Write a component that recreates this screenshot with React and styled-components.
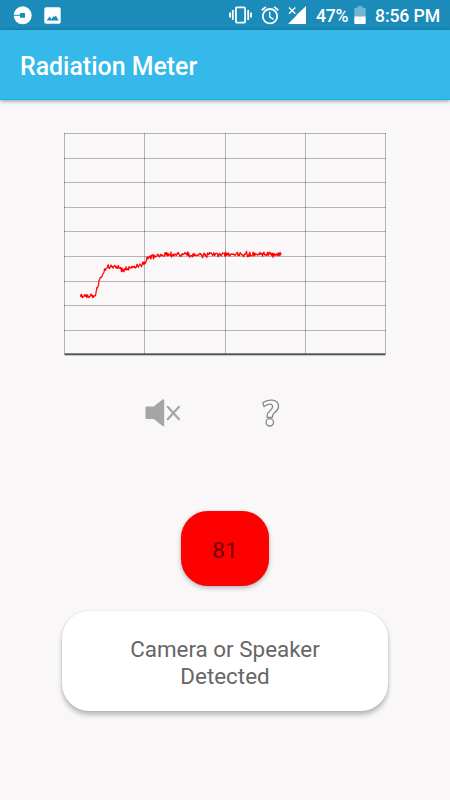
import React from "react";
import styled, { createGlobalStyle } from "styled-components";

const GlobalStyle = createGlobalStyle`
  * { box-sizing: border-box; }
  body { margin: 0; background: #f9f7f8; font-family: Roboto, "Liberation Sans", sans-serif; }
`;

const Screen = styled.div`
  width: 450px;
  height: 800px;
  overflow: hidden;
  display: flex;
  flex-direction: column;
  background: #f9f7f8;
`;

const StatusBar = styled.header`
  flex: none;
  height: 30px;
  padding: 0 9px 0 13px;
  display: flex;
  align-items: center;
  justify-content: space-between;
  background: #1b8bb9;
  color: #fff;
`;

const StatusGroup = styled.div`
  display: flex;
  align-items: center;
  gap: ${(p) => p.$gap}px;
  svg { display: block; flex: none; }
`;

const StatusText = styled.span`
  width: ${(p) => p.$width}px;
  font-size: 17.6px;
  font-weight: 500;
  line-height: 30px;
  padding: 1px 0 0 ${(p) => p.$inset || 0}px;
  letter-spacing: ${(p) => p.$spacing || 0}px;
  white-space: nowrap;
`;

const AppBar = styled.div`
  flex: none;
  height: 70px;
  padding: 4px 20px 0;
  display: flex;
  align-items: center;
  background: #34b9ea;
  border-bottom: 1px solid #0fb4ea;
  box-shadow: 0 1px 4px rgba(0, 0, 0, 0.4);
`;

const Title = styled.h1`
  margin: 0;
  color: #fff;
  font-size: 24.9px;
  font-weight: 500;
  line-height: 30px;
  white-space: nowrap;
`;

const Content = styled.main`
  flex: 1;
  display: flex;
  flex-direction: column;
  align-items: center;
`;

const Chart = styled.svg`
  display: block;
  flex: none;
  width: 322px;
  height: 223px;
  margin-top: 33px;
`;

const Controls = styled.div`
  width: 160px;
  height: 40px;
  margin-top: 37px;
  padding: 0 25px 0 0;
  display: flex;
  align-items: center;
  justify-content: space-between;
`;

const IconButton = styled.button`
  display: flex;
  padding: 0;
  border: 0;
  background: none;
`;

const Reading = styled.div`
  width: 88px;
  height: 75px;
  margin-top: 78px;
  padding-top: 2px;
  display: flex;
  align-items: center;
  justify-content: center;
  border-radius: 27px;
  background: #ff0000;
  color: #730000;
  font-size: 22.5px;
  box-shadow: 0 2px 5px rgba(0, 0, 0, 0.26), 0 0 1px rgba(0, 0, 0, 0.3);
`;

const MessageCard = styled.div`
  width: 326px;
  height: 100px;
  margin-top: 25px;
  padding-top: 3px;
  display: flex;
  align-items: center;
  justify-content: center;
  border-radius: 27px;
  background: #fff;
  color: #666;
  font-size: 22.4px;
  line-height: 26.5px;
  text-align: center;
  box-shadow: 0 4px 5px rgba(0, 0, 0, 0.25), 0 0 2px rgba(0, 0, 0, 0.13);
`;

const Message = styled.p`
  width: 210px;
  margin: 0;
`;

const ROWS = [0, 25, 49, 74, 98, 123, 148, 172, 197];
const COLUMNS = [0, 80, 161, 241, 321];

const TREND = [
  [16.5, 163], [31, 162.5], [32.5, 158], [34, 152], [36, 146], [39, 141],
  [41, 136], [46, 134], [52, 133], [59, 137], [66, 135.5], [73, 133],
  [81, 131], [83, 124.5], [91, 123.5], [101, 121.5], [217, 121.5],
];

function levelAt(x) {
  const i = Math.max(1, TREND.findIndex(([tx]) => tx >= x));
  const [x0, y0] = TREND[i - 1];
  const [x1, y1] = TREND[i];
  return y0 + ((y1 - y0) * (x - x0)) / (x1 - x0);
}

function buildTrace() {
  let seed = 71;
  const random = () => {
    seed = (seed * 16807) % 2147483647;
    return seed / 2147483647;
  };
  const points = [];
  for (let x = 16.5; x <= 217; x += 0.5) {
    const jitter = (random() + random() + random() - 1.5) * 2.8;
    points.push(`${x.toFixed(1)},${(levelAt(x) + jitter).toFixed(2)}`);
  }
  return points.join(" ");
}

const trace = buildTrace();

function FieldChart() {
  return (
    <Chart viewBox="0 0 322 223" role="img" aria-label="Field strength">
      <g fill="#000" fillOpacity="0.27">
        {ROWS.map((y) => <rect key={y} x="0" y={y} width="322" height="1" />)}
        {COLUMNS.map((x) => <rect key={x} x={x} y="0" width="1" height="221" />)}
      </g>
      <rect x="0.5" y="220.3" width="321" height="2" fill="#555" />
      <polyline points={trace} fill="none" stroke="#f00" strokeWidth="1.2" strokeLinejoin="bevel" />
    </Chart>
  );
}

const CarIcon = () => (
  <svg width="19" height="19" viewBox="0 0 19 19">
    <circle cx="9.7" cy="9.3" r="9" fill="#fff" />
    <path d="M0 9.3H8" stroke="#1b8bb9" strokeWidth="1" />
    <rect x="7" y="6.9" width="5" height="4.8" rx=".5" fill="#1b8bb9" />
  </svg>
);

const PictureIcon = () => (
  <svg width="17" height="17" viewBox="0 0 17 17">
    <rect x=".3" y=".3" width="16.4" height="16.4" rx="1.8" fill="#fff" />
    <path d="M2.7 13.4 5.5 9.6 7.5 12l2.2-3 1 1 1.1-1.600 3 5Z" fill="#1b8bb9" />
  </svg>
);

const VibrateIcon = () => (
  <svg width="23" height="18" viewBox="0 0 23 18" fill="none" stroke="#fff" strokeWidth="1.8">
    <rect x="6.9" y="1.4" width="9.2" height="15.2" rx="1" />
    <path d="M3.8 4v10M19.2 4v10M1 6.5v5M22 6.5v5" />
  </svg>
);

const AlarmIcon = () => (
  <svg width="18" height="19" viewBox="0 0 18 19" fill="none" stroke="#fff">
    <circle cx="9" cy="10.2" r="7.2" strokeWidth="1.8" />
    <path d="M8.7 5.8v5l3.8 2.5" strokeWidth="1.4" />
    <path d="M.7 4.2 4.8.9M13.2.9l4.1 3.3" strokeWidth="1.8" />
  </svg>
);

const SignalIcon = () => (
  <svg width="18" height="18" viewBox="0 0 18 18">
    <path d="M18 0v18H0l8.5-8.5V9Z" fill="#fff" />
    <path d="m1 1.5 6.4 6.3M7.4 1.5 1 7.8" stroke="#fff" strokeWidth="1.3" />
  </svg>
);

const BatteryIcon = () => (
  <svg width="12" height="18" viewBox="0 0 12 18">
    <path d="M1.3 2H3.5V0h5v2h2.2q1 0 1 1v8H.3V3q0-1 1-1Z" fill="#70b6d3" />
    <path d="M.3 10.5h11.4V17q0 1-1 1H1.3q-1 0-1-1Z" fill="#fff" />
  </svg>
);

const MutedIcon = () => (
  <svg width="36" height="28" viewBox="0 0 36 28">
    <path d="M1.5 7.5H8.700L17.500.5q1.700-.8 1.700 1v25q0 1.400-1.500.6L8.700 20H1.500q-1 0-1-1V8.500q0-1 1-1Z" fill="#a5a5a5" />
    <path d="m22.700 7.800 11.300 12.500M34 7.800 22.700 20.300" stroke="#a5a5a5" strokeWidth="2.200" strokeLinecap="round" />
  </svg>
);

const HelpIcon = () => (
  <svg width="18" height="28" viewBox="0 0 18 28" fill="#fbfafb" stroke="#888" strokeWidth="1.3" strokeLinejoin="round">
    <path d="M.9 3.800C5.200.2 16.500-.7 16.500 7.400c0 5.500-6 6.100-6 9.700v1.200H5.100v-1.600c0-4.600 5.500-5.700 5.500-9 0-3.300-4-3.200-7.300-.9L2 7.600Z" />
    <circle cx="7.800" cy="23.300" r="3.700" />
  </svg>
);

export default function App() {
  return (
    <>
      <GlobalStyle />
      <Screen>
        <StatusBar>
          <StatusGroup $gap={12}>
            <CarIcon />
            <PictureIcon />
          </StatusGroup>
          <StatusGroup $gap={9}>
            <VibrateIcon />
            <AlarmIcon />
            <SignalIcon />
            <StatusText $width={30} $inset={1} $spacing={-0.3}>47%</StatusText>
            <BatteryIcon />
            <StatusText $width={66} $spacing={-0.1}>8:56 PM</StatusText>
          </StatusGroup>
        </StatusBar>
        <AppBar>
          <Title>Radiation Meter</Title>
        </AppBar>
        <Content>
          <FieldChart />
          <Controls>
            <IconButton aria-label="Unmute"><MutedIcon /></IconButton>
            <IconButton aria-label="Help"><HelpIcon /></IconButton>
          </Controls>
          <Reading>81</Reading>
          <MessageCard>
            <Message>Camera or Speaker Detected</Message>
          </MessageCard>
        </Content>
      </Screen>
    </>
  );
}
